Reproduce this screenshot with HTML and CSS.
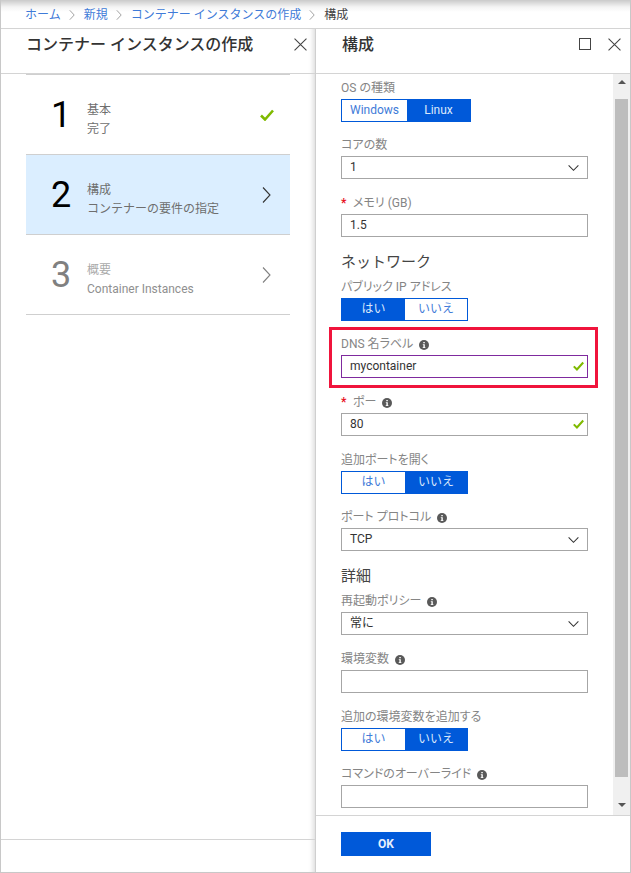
FILE: index.html
```html
<!DOCTYPE html>
<html lang="ja">
<head>
  <meta charset="UTF-8" />
  <meta name="viewport" content="width=device-width, initial-scale=1.0"/>
  <title>構成</title>
  <link rel="stylesheet" href="styles.css">
</head>
<body>

  <svg class="icon-defs" width="0" height="0">
    <symbol id="close" viewBox="0 0 12 12"><path d="M.5.5l11 11M11.5.5l-11 11" fill="none" stroke="currentColor"/></symbol>
    <symbol id="check" viewBox="0 0 14 12"><path d="M1 6.5l4 4 8-9" fill="none" stroke="currentColor" stroke-width="2.6"/></symbol>
    <symbol id="chevron" viewBox="0 0 9 16"><path d="M1 .5l7 7.5-7 7.5" fill="none" stroke="currentColor" stroke-width="1.1"/></symbol>
    <symbol id="down" viewBox="0 0 14 8"><path d="M.5.5L7 7 13.5.5" fill="none" stroke="currentColor" stroke-width="1.4"/></symbol>
    <symbol id="info" viewBox="0 0 10 10"><circle cx="5" cy="5" r="5" fill="currentColor"/><path d="M4.3 2h1.5v1.3H4.3zM3.8 4.2h2v3h.6v.9H3.7v-.9h.7V5.1h-.6z" fill="#fff"/></symbol>
  </svg>

  <nav class="crumbs">
    <a>ホーム</a>
    <svg class="crumb-sep"><use href="#chevron"/></svg>
    <a>新規</a>
    <svg class="crumb-sep"><use href="#chevron"/></svg>
    <a>コンテナー インスタンスの作成</a>
    <svg class="crumb-sep"><use href="#chevron"/></svg>
    <span>構成</span>
  </nav>

  <main class="blades">

    <!-- Left blade: steps -->
    <section class="blade blade-steps">
      <header class="blade-head">
        <h2>コンテナー インスタンスの作成</h2>
        <svg class="head-icon"><use href="#close"/></svg>
      </header>
      <div class="steps">
        <div class="step">
          <span class="step-num">1</span>
          <div class="step-text"><div>基本</div><div>完了</div></div>
          <svg class="step-check"><use href="#check"/></svg>
        </div>
        <div class="step step-active">
          <span class="step-num">2</span>
          <div class="step-text"><div>構成</div><div>コンテナーの要件の指定</div></div>
          <svg class="step-arrow"><use href="#chevron"/></svg>
        </div>
        <div class="step step-off">
          <span class="step-num">3</span>
          <div class="step-text"><div class="step-title">概要</div><div>Container Instances</div></div>
          <svg class="step-arrow"><use href="#chevron"/></svg>
        </div>
      </div>
      <div class="blade-foot blade-foot-left"></div>
    </section>

    <!-- Right blade: form -->
    <section class="blade blade-form">
      <header class="blade-head">
        <h2>構成</h2>
        <div class="head-actions">
          <span class="maximize"></span>
          <svg class="head-icon"><use href="#close"/></svg>
        </div>
      </header>

      <div class="form-wrap">
        <div class="form">
          <div class="field field-toggle">
            <div class="label">OS の種類</div>
            <div class="toggle toggle-os"><span>Windows</span><span class="on">Linux</span></div>
          </div>
          <div class="field">
            <div class="label">コアの数</div>
            <div class="control">1<svg class="caret"><use href="#down"/></svg></div>
          </div>
          <div class="field">
            <div class="label"><span class="req">*</span>メモリ (GB)</div>
            <div class="control">1.5</div>
          </div>

          <h3 class="group">ネットワーク</h3>
          <div class="field field-toggle">
            <div class="label">パブリック IP アドレス</div>
            <div class="toggle"><span class="on">はい</span><span>いいえ</span></div>
          </div>
          <div class="field field-marked">
            <div class="marker"></div>
            <div class="label">DNS 名ラベル<svg class="info"><use href="#info"/></svg></div>
            <div class="control control-focus">mycontainer<svg class="ok"><use href="#check"/></svg></div>
          </div>
          <div class="field">
            <div class="label"><span class="req">*</span>ポー<svg class="info"><use href="#info"/></svg></div>
            <div class="control">80<svg class="ok"><use href="#check"/></svg></div>
          </div>
          <div class="field field-toggle">
            <div class="label">追加ポートを開く</div>
            <div class="toggle"><span>はい</span><span class="on">いいえ</span></div>
          </div>
          <div class="field">
            <div class="label">ポート プロトコル<svg class="info"><use href="#info"/></svg></div>
            <div class="control">TCP<svg class="caret"><use href="#down"/></svg></div>
          </div>

          <h3 class="group">詳細</h3>
          <div class="field">
            <div class="label">再起動ポリシー<svg class="info"><use href="#info"/></svg></div>
            <div class="control">常に<svg class="caret"><use href="#down"/></svg></div>
          </div>
          <div class="field">
            <div class="label">環境変数<svg class="info"><use href="#info"/></svg></div>
            <div class="control"></div>
          </div>
          <div class="field field-toggle">
            <div class="label">追加の環境変数を追加する</div>
            <div class="toggle"><span>はい</span><span class="on">いいえ</span></div>
          </div>
          <div class="field">
            <div class="label">コマンドのオーバーライド<svg class="info"><use href="#info"/></svg></div>
            <div class="control"></div>
          </div>
        </div>

        <div class="scrollbar">
          <div class="scroll-btn"><span class="tri-up"></span></div>
          <div class="scroll-thumb"></div>
          <div class="scroll-btn scroll-btn-end"><span class="tri-down"></span></div>
        </div>
      </div>

      <div class="blade-foot">
        <button class="ok-btn">OK</button>
      </div>
    </section>

  </main>
</body>
</html>
```

FILE: styles.css
```css
* {
  box-sizing: border-box;
}

html, body {
  height: 873px;
}

body {
  margin: 0;
  display: flex;
  flex-direction: column;
  overflow: hidden;
  background: white;
  border-left: 1px solid #c8c8c8;
  border-right: 1px solid #c8c8c8;
  border-bottom: 1px solid #c8c8c8;
  font-family: Roboto, "Noto Sans CJK JP", sans-serif;
  font-size: 12px;
  color: #444;
}

.icon-defs {
  position: absolute;
}

/* Breadcrumb */
.crumbs {
  height: 29px;
  flex: none;
  display: flex;
  align-items: center;
  padding: 2px 0 0 24px;
  background: linear-gradient(#cacaca, #f4f4f4 7px, white 12px);
  border-bottom: 1px solid #d4d4d4;
  color: #444;
  line-height: 16px;
}

.crumbs a {
  color: #3f7bd8;
}

.crumb-sep {
  width: 6px;
  height: 10px;
  margin: 0 9px 0 8px;
  color: #777;
}

/* Blades */
.blades {
  flex: 1;
  display: flex;
  min-height: 0;
}

.blade {
  display: flex;
  flex-direction: column;
  min-width: 0;
}

.blade-steps {
  width: 315px;
  border-right: 1px solid #cfcfcf;
  box-shadow: inset -6px 0 5px -4px #dcdcdc;
}

.blade-form {
  flex: 1;
}

.blade-head {
  height: 45px;
  flex: none;
  display: flex;
  justify-content: space-between;
  padding: 6px 8px 0 25px;
  border-bottom: 1px solid #d4d4d4;
}

.blade-head h2 {
  margin: 0;
  font-size: 16px;
  line-height: 20px;
  font-weight: 500;
  color: #333;
}

.blade-form .blade-head {
  padding-right: 9px;
}

.blade-form .blade-head h2 {
  margin-left: 1px;
}

.head-actions {
  display: flex;
  gap: 17px;
}

.head-icon {
  width: 13px;
  height: 13px;
  margin-top: 3px;
  color: #444;
}

.maximize {
  width: 12px;
  height: 12px;
  margin-top: 3px;
  border: 1px solid #444;
}

/* Steps */
.steps {
  flex: 1;
  margin: 0 25px;
  border-top: 1px solid #cfcfcf;
}

.step {
  height: 80px;
  display: flex;
  align-items: center;
  padding-right: 19px;
  border-bottom: 1px solid #cfcfcf;
}

.step-num {
  width: 61px;
  padding-left: 25px;
  font-size: 36px;
  line-height: 1;
  color: black;
}

.step-text {
  flex: 1;
  margin-top: 11px;
  line-height: 19px;
  color: #6e6e6e;
}

.step-check {
  width: 14px;
  height: 12px;
  margin-right: -3px;
  color: #7fba00;
}

.step-arrow {
  width: 9px;
  height: 16px;
  color: #333;
}

.step-active {
  background: #dbeeff;
}

.step-off .step-num {
  color: #808080;
}

.step-off .step-text {
  color: #8f8f8f;
}

.step-off .step-title {
  color: #aaa;
}

.step-off .step-arrow {
  color: #808080;
}

.blade-foot {
  height: 57px;
  flex: none;
  padding: 16px 25px;
  border-top: 1px solid #d4d4d4;
}

.blade-foot-left {
  height: 33px;
}

/* Form */
.form-wrap {
  flex: 1;
  display: flex;
  min-height: 0;
}

.form {
  width: 297px;
  flex: none;
  padding: 5px 25px 0;
  overflow: hidden;
}

.field {
  margin-bottom: 15px;
}

.field-toggle {
  margin-bottom: 14px;
}

.field-marked {
  position: relative;
}

.marker {
  position: absolute;
  top: -8px;
  left: -12px;
  width: 269px;
  height: 61px;
  border: 3px solid #f0143c;
  pointer-events: none;
}

.label {
  height: 20px;
  display: flex;
  align-items: flex-start;
  padding-top: 1px;
  line-height: 16px;
  color: #858585;
  font-feature-settings: "palt";
}

.req {
  width: 12px;
  color: #e81123;
  font-weight: 700;
}

.info {
  width: 10px;
  height: 10px;
  margin: 4px 0 0 6px;
  color: #595959;
}

.control {
  position: relative;
  height: 23px;
  width: 247px;
  padding-left: 8px;
  border: 1px solid #a6a6a6;
  line-height: 21px;
  color: #333;
}

.control-focus {
  border-color: #7f2a9e;
}

.caret {
  position: absolute;
  top: 8px;
  right: 8px;
  width: 11px;
  height: 6px;
  color: #333;
}

.ok {
  position: absolute;
  top: 5px;
  right: 3px;
  width: 11px;
  height: 10px;
  color: #7fba00;
}

.group {
  height: 26px;
  margin: 0;
  font-size: 15px;
  line-height: 20px;
  font-weight: 400;
  color: #444;
}

.toggle {
  display: grid;
  grid-template-columns: 63px 62px;
  width: 127px;
  height: 23px;
  border: 1px solid #0059d9;
  line-height: 21px;
  text-align: center;
  color: #3f7bd8;
}

.toggle-os {
  grid-template-columns: 65px 63px;
  width: 130px;
}

.toggle .on {
  background: #0059d9;
  color: #dbe8fb;
}

/* Scrollbar */
.scrollbar {
  flex: 1;
  display: flex;
  flex-direction: column;
  align-items: center;
  background: #f0f0f0;
}

.scroll-btn {
  height: 25px;
  flex: none;
  display: flex;
  justify-content: center;
  padding-top: 6px;
}

.scroll-btn-end {
  margin-top: auto;
  height: 20px;
  padding-top: 8px;
}

.scroll-thumb {
  width: 13px;
  height: 678px;
  background: #bdbdbd;
}

.tri-up, .tri-down {
  width: 0;
  height: 0;
  border-left: 4px solid transparent;
  border-right: 4px solid transparent;
}

.tri-up {
  border-bottom: 4px solid #555;
}

.tri-down {
  border-top: 4px solid #555;
}

.ok-btn {
  display: block;
  width: 90px;
  height: 24px;
  border: none;
  background: #0059d9;
  color: #e6effc;
  font-family: inherit;
  font-size: 12px;
  font-weight: 700;
}
```
